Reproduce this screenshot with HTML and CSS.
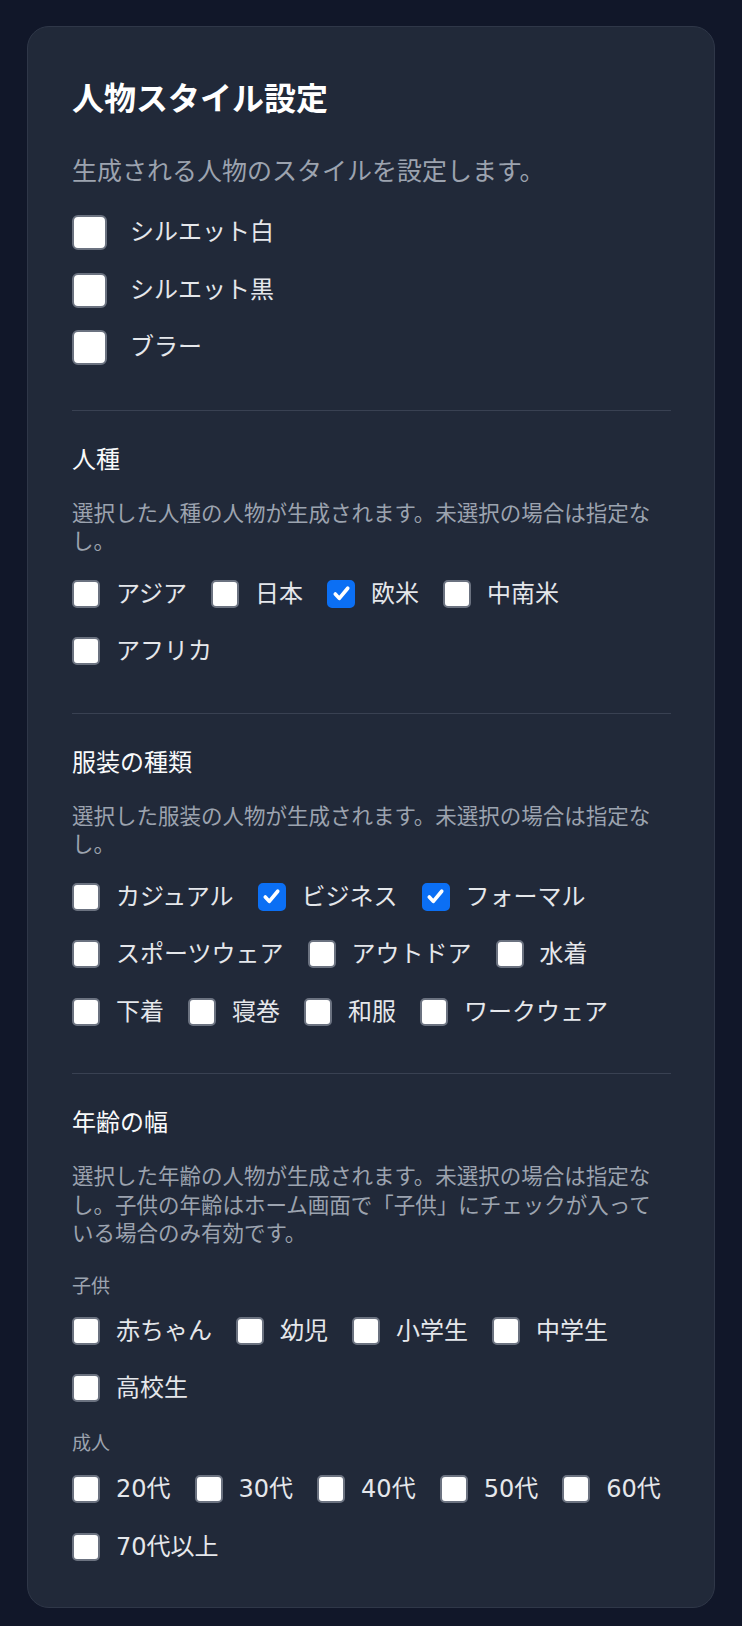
FILE: index.html
```html
<!DOCTYPE html>
<html lang="ja">
<head>
    <title>人物スタイル設定</title>
    <meta charset="UTF-8">
    <meta name="viewport" content="width=device-width, initial-scale=1.0">
    <link rel="stylesheet" href="styles.css">
</head>

<body>
    <main class="card">
        <section class="intro">
            <h1>人物スタイル設定</h1>
            <p class="lead">生成される人物のスタイルを設定します。</p>
            <div class="stack">
                <label class="option big"><span class="box"></span>シルエット白</label>
                <label class="option big"><span class="box"></span>シルエット黒</label>
                <label class="option big"><span class="box"></span>ブラー</label>
            </div>
        </section>

        <section class="group">
            <h2>人種</h2>
            <p class="note">選択した人種の人物が生成されます。未選択の場合は指定なし。</p>
            <div class="options">
                <label class="option"><span class="box"></span>アジア</label>
                <label class="option"><span class="box"></span>日本</label>
                <label class="option"><span class="box checked"><svg viewBox="0 0 24 24"><path d="M5.5 12.5l4.2 4.6L18.5 6.5"/></svg></span>欧米</label>
                <label class="option"><span class="box"></span>中南米</label>
                <label class="option"><span class="box"></span>アフリカ</label>
            </div>
        </section>

        <section class="group">
            <h2>服装の種類</h2>
            <p class="note">選択した服装の人物が生成されます。未選択の場合は指定なし。</p>
            <div class="options">
                <label class="option"><span class="box"></span>カジュアル</label>
                <label class="option"><span class="box checked"><svg viewBox="0 0 24 24"><path d="M5.5 12.5l4.2 4.6L18.5 6.5"/></svg></span>ビジネス</label>
                <label class="option"><span class="box checked"><svg viewBox="0 0 24 24"><path d="M5.5 12.5l4.2 4.6L18.5 6.5"/></svg></span>フォーマル</label>
                <label class="option"><span class="box"></span>スポーツウェア</label>
                <label class="option"><span class="box"></span>アウトドア</label>
                <label class="option"><span class="box"></span>水着</label>
                <label class="option"><span class="box"></span>下着</label>
                <label class="option"><span class="box"></span>寝巻</label>
                <label class="option"><span class="box"></span>和服</label>
                <label class="option"><span class="box"></span>ワークウェア</label>
            </div>
        </section>

        <section class="group last">
            <h2>年齢の幅</h2>
            <p class="note">選択した年齢の人物が生成されます。未選択の場合は指定なし。子供の年齢はホーム画面で「子供」にチェックが入っている場合のみ有効です。</p>

            <p class="sub">子供</p>
            <div class="options">
                <label class="option"><span class="box"></span>赤ちゃん</label>
                <label class="option"><span class="box"></span>幼児</label>
                <label class="option"><span class="box"></span>小学生</label>
                <label class="option"><span class="box"></span>中学生</label>
                <label class="option"><span class="box"></span>高校生</label>
            </div>

            <p class="sub adult">成人</p>
            <div class="options">
                <label class="option"><span class="box"></span>20代</label>
                <label class="option"><span class="box"></span>30代</label>
                <label class="option"><span class="box"></span>40代</label>
                <label class="option"><span class="box"></span>50代</label>
                <label class="option"><span class="box"></span>60代</label>
                <label class="option"><span class="box"></span>70代以上</label>
            </div>
        </section>
    </main>
</body>
</html>
```

FILE: styles.css
```css
html {
    font-family: "Noto Sans CJK JP", "Noto Sans", sans-serif;
    background-color: #111729;
}

body {
    margin: 0;
    padding: 26px 27px 19px 27px;
    color: #e5e7eb;
}

.card {
    display: block;
    background-color: #212939;
    border: 1px solid #2f3748;
    border-radius: 22px;
    padding: 49px 43px 43px 44px;
}

h1 {
    margin: 0;
    font-size: 32px;
    line-height: 40px;
    font-weight: 700;
    color: #fff;
}

.lead {
    margin: 37px 0 30px 0;
    font-size: 25px;
    line-height: 32px;
    color: #9ca3af;
}

.stack {
    display: flex;
    flex-direction: column;
    gap: 22.5px;
}

section {
    padding-bottom: 44.5px;
}

.group {
    border-top: 1px solid #394152;
    padding-top: 32px;
}

.group.last {
    padding-bottom: 0;
}

h2 {
    margin: 0;
    font-size: 24px;
    line-height: 30px;
    font-weight: 400;
    color: #f9fafb;
}

.note {
    margin: 25px 0 22px 0;
    font-size: 21.5px;
    line-height: 28.5px;
    color: #9ca3af;
}

.sub {
    margin: 25px 0 16px 0;
    font-size: 19px;
    line-height: 26px;
    color: #9ca3af;
}

.note + .sub {
    margin-top: 25px;
}

.sub.adult {
    margin-top: 24px;
    margin-bottom: 17px;
}

.options {
    display: flex;
    flex-wrap: wrap;
    column-gap: 24px;
    row-gap: 23.5px;
}

.option {
    display: flex;
    align-items: center;
    gap: 16px;
    font-family: "DejaVu Sans", "Noto Sans CJK JP", sans-serif;
    font-size: 24px;
    line-height: 34px;
    color: #e5e7eb;
}

.box {
    box-sizing: border-box;
    width: 28px;
    height: 28px;
    flex: none;
    background-color: #fff;
    border: 2px solid #6b7280;
    border-radius: 5px;
    display: flex;
    align-items: center;
    justify-content: center;
}

.box.checked {
    background-color: #0b6ff4;
    border-color: #0b6ff4;
}

.box svg {
    width: 23px;
    height: 23px;
    fill: none;
    stroke: #fff;
    stroke-width: 3.8;
    stroke-linecap: round;
    stroke-linejoin: round;
}

.option.big {
    gap: 23px;
    line-height: 35px;
}

.option.big .box {
    width: 35px;
    height: 35px;
    border-radius: 6px;
}
```
